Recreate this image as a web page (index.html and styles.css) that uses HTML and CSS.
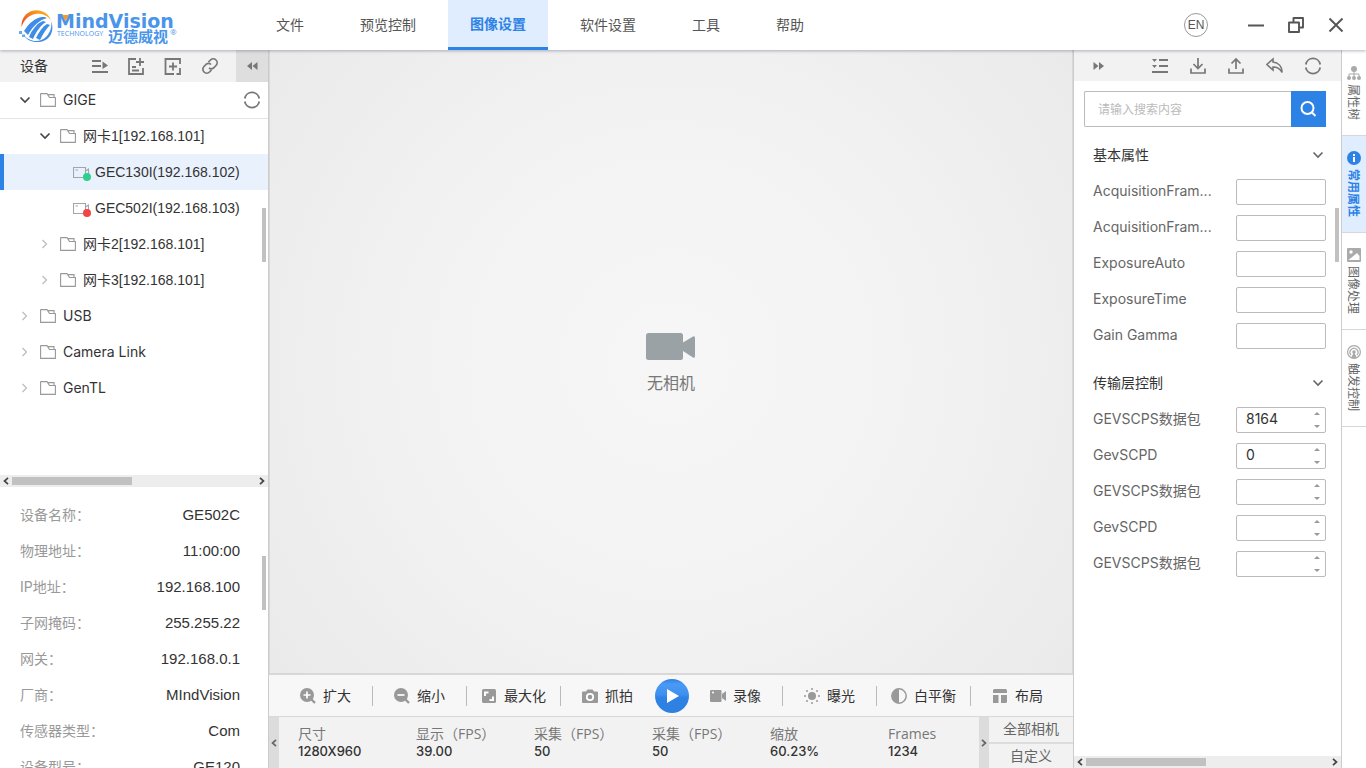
FILE: index.html
```html
<!DOCTYPE html>
<html lang="zh-CN">
<head>
<meta charset="utf-8">
<title>MindVision</title>
<link rel="stylesheet" href="styles.css">
</head>
<body>
<svg width="0" height="0" class="defs" aria-hidden="true">
  <symbol id="folder" viewBox="0 0 16 14"><path d="M.6 13.4V1Q.6.6 1 .6H7L9.5 4.5H15.4V13.4ZM7.5 1.6H14V4.5" fill="none" stroke="currentColor" stroke-width="1.1"/></symbol>
  <symbol id="down" viewBox="0 0 12 8"><path d="M1.5 1.5 6 6 10.500 1.500" fill="none" stroke="currentColor" stroke-width="1.600"/></symbol>
  <symbol id="right" viewBox="0 0 8 12"><path d="M1.500 2 5.500 6 1.500 10" fill="none" stroke="currentColor" stroke-width="1.200"/></symbol>
  <symbol id="cam" viewBox="0 0 18 16"><path d="M.5 2.500H12.500V12.500H.5ZM2.500 5H5M12.500 6 15.500 4V10" fill="none" stroke="#a3a6a8" stroke-width="1.100"/><circle cx="14" cy="12" r="4" fill="currentColor"/></symbol>
  <symbol id="sync" viewBox="0 0 18 18"><path d="M1.800 7.500A7.300 7.300 0 0 1 16.200 7.500M16.200 10.500A7.300 7.300 0 0 1 1.800 10.500" fill="none" stroke="currentColor" stroke-width="1.800"/></symbol>
  <symbol id="arl" viewBox="0 0 6 8"><path d="M5 .8 1.500 4 5 7.200" fill="none" stroke="currentColor" stroke-width="1.700"/></symbol>
  <symbol id="arr" viewBox="0 0 6 8"><path d="M1 .8 4.500 4 1 7.200" fill="none" stroke="currentColor" stroke-width="1.700"/></symbol>
</svg>

<header class="header">
  <svg class="logo" width="160" height="41" viewBox="0 0 160 41" role="img" aria-label="MindVision">
    <defs><linearGradient id="sun" x1="0" y1="1" x2="1" y2="0"><stop offset="0" stop-color="#e8401c"/><stop offset=".5" stop-color="#f47b1c"/><stop offset="1" stop-color="#fdc51f"/></linearGradient></defs>
    <path d="M2.500 18C2 7 10 1 18 1.200C25 1.400 30 6 32 11C27 5 21 4 16 5C9 6.500 5 11 2.500 18Z" fill="url(#sun)"/>
    <path d="M5 22C10 14 16 9 23 8C25 7.700 27 8.200 28 9C20 11 14 17 9 26Z" fill="#3f8de6"/>
    <path d="M0 22H3V25H0ZM3 25.500H6V28H3Z" fill="#6aa9ec"/>
    <path d="M10 28C13 21 18 14 24 12L27 13C21 17 17 23 14 30ZM17 29C20 23 23 18 28 15L31 16C27 20 24 25 21 31Z" fill="#3f8de6"/>
    <path d="M5 26C9 32 20 35 27 28C32 23 33 17 32 12C36 22 31 32 20 33C13 33.500 7 31 5 26Z" fill="#3f8de6"/>
    <text x="37" y="19" class="logo-name">MindVision</text>
    <path d="M43 6H50L46.500 12Z" fill="#f49a2d"/>
    <text x="38" y="27" class="logo-tech">TECHNOLOGY</text>
    <text x="89" y="33" class="logo-cn">迈德威视</text>
    <text x="151" y="26" class="logo-reg">®</text>
  </svg>
  <nav class="nav">
    <a href="#">文件</a><a href="#">预览控制</a><a href="#" class="active">图像设置</a><a href="#">软件设置</a><a href="#">工具</a><a href="#">帮助</a>
  </nav>
  <div class="window-tools">
    <button class="lang">EN</button>
    <button aria-label="最小化"><svg width="16" height="16"><path d="M0 8.500H16" stroke="#555" stroke-width="2"/></svg></button>
    <button aria-label="还原"><svg width="16" height="16"><path d="M1 5.500H11V15H1ZM5.500 5V1H15V10.500H11.500" fill="none" stroke="#555" stroke-width="1.900" stroke-linejoin="round"/></svg></button>
    <button aria-label="关闭"><svg width="16" height="16"><path d="M1.500 1.500 14.500 14.500M14.500 1.500 1.500 14.500" stroke="#555" stroke-width="1.900"/></svg></button>
  </div>
</header>

<div class="main">
  <aside class="left">
    <div class="bar left-bar">
      <h2>设备</h2>
      <div class="bar-tools">
        <button aria-label="列表"><svg width="18" height="18"><path d="M2 4H11M2 9H11M2 15H18" stroke="currentColor" stroke-width="1.900"/><path d="M12.500 4.500 18 8.500 12.500 12Z" fill="currentColor"/></svg></button>
        <button aria-label="添加文档"><svg width="18" height="18"><path d="M9 2H2V17H16V11M5 10H9M5 13.500H12" fill="none" stroke="currentColor" stroke-width="1.800"/><path d="M13 1V9M9 5H17" stroke="currentColor" stroke-width="1.800"/></svg></button>
        <button aria-label="添加"><svg width="18" height="18"><path d="M16 7V2H1.500V17H10M12.500 17H16V11M9 5.500V13.500M5 9.500H13" fill="none" stroke="currentColor" stroke-width="1.800"/></svg></button>
        <button aria-label="链接"><svg width="18" height="18"><path d="M7.500 5 9.500 3A3.800 3.800 0 0 1 15 8.500L12.500 11A3.800 3.800 0 0 1 8 11M10.500 13 8.500 15A3.800 3.800 0 0 1 3 9.500L5.500 7A3.800 3.800 0 0 1 10 7.500" fill="none" stroke="currentColor" stroke-width="1.700"/></svg></button>
      </div>
      <button class="collapse" aria-label="收起"><svg width="11" height="8"><path d="M5 0V8L0 4ZM10.500 0V8L5.500 4Z" fill="currentColor"/></svg></button>
    </div>
    <div class="tree-wrap">
      <ul class="tree">
        <li class="row root"><svg class="tw open"><use href="#down"/></svg><svg class="folder"><use href="#folder"/></svg><span>GIGE</span><button class="refresh" aria-label="刷新"><svg width="18" height="18"><use href="#sync"/></svg></button></li>
        <li class="row l2"><svg class="tw open"><use href="#down"/></svg><svg class="folder"><use href="#folder"/></svg><span>网卡1[192.168.101]</span></li>
        <li class="row l3 selected"><svg class="cam on"><use href="#cam"/></svg><span>GEC130I(192.168.102)</span></li>
        <li class="row l3"><svg class="cam off"><use href="#cam"/></svg><span>GEC502I(192.168.103)</span></li>
        <li class="row l2"><svg class="tw"><use href="#right"/></svg><svg class="folder"><use href="#folder"/></svg><span>网卡2[192.168.101]</span></li>
        <li class="row l2"><svg class="tw"><use href="#right"/></svg><svg class="folder"><use href="#folder"/></svg><span>网卡3[192.168.101]</span></li>
        <li class="row"><svg class="tw"><use href="#right"/></svg><svg class="folder"><use href="#folder"/></svg><span>USB</span></li>
        <li class="row"><svg class="tw"><use href="#right"/></svg><svg class="folder"><use href="#folder"/></svg><span>Camera Link</span></li>
        <li class="row"><svg class="tw"><use href="#right"/></svg><svg class="folder"><use href="#folder"/></svg><span>GenTL</span></li>
      </ul>
      <div class="vthumb tree-thumb"></div>
    </div>
    <div class="hscroll"><svg width="6" height="8"><use href="#arl"/></svg><div class="track"><div class="hthumb"></div></div><svg width="6" height="8"><use href="#arr"/></svg></div>
    <div class="details-wrap">
      <dl class="details">
        <div><dt>设备名称：</dt><dd>GE502C</dd></div>
        <div><dt>物理地址：</dt><dd>11:00:00</dd></div>
        <div><dt>IP地址：</dt><dd>192.168.100</dd></div>
        <div><dt>子网掩码：</dt><dd>255.255.22</dd></div>
        <div><dt>网关：</dt><dd>192.168.0.1</dd></div>
        <div><dt>厂商：</dt><dd>MIndVision</dd></div>
        <div><dt>传感器类型：</dt><dd>Com</dd></div>
        <div><dt>设备型号：</dt><dd>GE120</dd></div>
      </dl>
      <div class="vthumb details-thumb"></div>
    </div>
  </aside>

  <main class="center">
    <section class="view">
      <svg width="50" height="28" viewBox="0 0 50 28"><rect width="37" height="27" rx="2.500" fill="#9aa2a5"/><path d="M37 9.500 47 3.500Q49 2.500 49 5V23Q49 25.500 47 24.500L37 18Z" fill="#9aa2a5"/></svg>
      <p>无相机</p>
    </section>
    <div class="actions">
      <button class="act"><svg width="16" height="16"><circle cx="7" cy="7" r="7"/><path d="M11 11 15 15" stroke="#999" stroke-width="2.400"/><path d="M7 3.500V10.500M3.500 7H10.500" stroke="#fff" stroke-width="1.700"/></svg>扩大</button>
      <button class="act"><svg width="16" height="16"><circle cx="7" cy="7" r="7"/><path d="M11 11 15 15" stroke="#999" stroke-width="2.400"/><path d="M3.500 7H10.500" stroke="#fff" stroke-width="1.700"/></svg>缩小</button>
      <button class="act"><svg width="16" height="16"><rect x="1" y="1" width="14" height="14" rx="1.500"/><path d="M4 8V4.500H7.500M12 8.500V12H8.500" fill="none" stroke="#fff" stroke-width="2"/></svg>最大化</button>
      <button class="act last"><svg width="16" height="16"><path d="M1 3.500H4L5.500 1.500H10.500L12 3.500H15Q16 3.500 16 4.500V14Q16 15 15 15H1Q0 15 0 14V4.500Q0 3.500 1 3.500Z"/><circle cx="8" cy="9" r="3.200" fill="none" stroke="#fff" stroke-width="1.800"/></svg>抓拍</button>
      <button class="play" aria-label="播放"><svg width="34" height="34"><defs><linearGradient id="pg" x1="0" y1="0" x2="0" y2="1"><stop offset="0" stop-color="#2f7fe0"/><stop offset=".15" stop-color="#4a9af5"/><stop offset=".45" stop-color="#3f90ee"/><stop offset=".55" stop-color="#2d82e5"/><stop offset="1" stop-color="#2e80e0"/></linearGradient></defs><circle cx="17" cy="17" r="17" fill="url(#pg)"/><path d="M12 10V24L24 17Z" fill="#fff"/></svg></button>
      <button class="act"><svg width="16" height="16"><rect y="2" width="11.500" height="12" rx="1"/><path d="M12 6 16 3V13L12 10Z"/><circle cx="3" cy="4.500" r="1" fill="#fff"/></svg>录像</button>
      <button class="act"><svg width="16" height="16"><circle cx="8" cy="8" r="4"/><g><circle cx="8" cy="1" r="1"/><circle cx="8" cy="15" r="1"/><circle cx="1" cy="8" r="1"/><circle cx="15" cy="8" r="1"/><circle cx="3" cy="3" r="1"/><circle cx="13" cy="3" r="1"/><circle cx="3" cy="13" r="1"/><circle cx="13" cy="13" r="1"/></g></svg>曝光</button>
      <button class="act"><svg width="16" height="16"><circle cx="8" cy="8" r="7.200" fill="none" stroke="#999" stroke-width="1.500"/><path d="M8 1A7 7 0 0 0 8 15Z"/></svg>白平衡</button>
      <button class="act last"><svg width="16" height="16"><path d="M2.500 1H13.500Q15 1 15 2.500V5H1V2.500Q1 1 2.500 1ZM1 7H6.500V15H1ZM9 7H15V13.500Q15 15 13.500 15H9Z"/></svg>布局</button>
    </div>
    <div class="status">
      <button class="step" aria-label="向左"><svg width="6" height="8"><use href="#arl"/></svg></button>
      <dl class="stats">
        <div><dt>尺寸</dt><dd>1280X960</dd></div>
        <div><dt>显示（FPS）</dt><dd>39.00</dd></div>
        <div><dt>采集（FPS）</dt><dd>50</dd></div>
        <div><dt>采集（FPS）</dt><dd>50</dd></div>
        <div><dt>缩放</dt><dd>60.23%</dd></div>
        <div><dt>Frames</dt><dd>1234</dd></div>
      </dl>
      <button class="step" aria-label="向右"><svg width="6" height="8"><use href="#arr"/></svg></button>
      <div class="modes"><button>全部相机</button><button>自定义</button></div>
    </div>
  </main>

  <aside class="right">
    <div class="bar right-bar">
      <button aria-label="收起"><svg width="11" height="8"><path d="M.5 0V8L5.500 4ZM6 0V8L11 4Z" fill="currentColor"/></svg></button>
      <div class="bar-tools">
        <button aria-label="列表"><svg width="18" height="18"><path d="M7 3H16M7 9H16M0 15H16" stroke="currentColor" stroke-width="1.900"/><path d="M0 2H5L2.500 5ZM0 8H5L2.500 11Z" fill="currentColor"/></svg></button>
        <button aria-label="下载"><svg width="18" height="18"><path d="M8 1V11M3.500 7 8 11.500 12.500 7M1 11.500V16H15V11.500" fill="none" stroke="currentColor" stroke-width="1.700"/></svg></button>
        <button aria-label="上传"><svg width="18" height="18"><path d="M8 12V2M3.500 6.500 8 2 12.500 6.500M1 11.500V16H15V11.500" fill="none" stroke="currentColor" stroke-width="1.700"/></svg></button>
        <button aria-label="撤销"><svg width="18" height="18"><path d="M7 2 .8 7.500 7 13V10C11 10 14 11.500 16 15.500C16 9 12 5.500 7 5Z" fill="none" stroke="currentColor" stroke-width="1.600"/></svg></button>
        <button aria-label="刷新"><svg width="18" height="18"><use href="#sync"/></svg></button>
      </div>
    </div>
    <form class="search"><input type="search" placeholder="请输入搜索内容" aria-label="搜索"><button type="button" aria-label="搜索"><svg width="18" height="18"><circle cx="7.500" cy="8" r="6" fill="none" stroke="#fff" stroke-width="2"/><path d="M12 12.500 15.500 16" stroke="#fff" stroke-width="2"/></svg></button></form>
    <div class="props">
      <section class="group">
        <h3>基本属性<svg width="12" height="8"><use href="#down"/></svg></h3>
        <div class="prop"><label for="p1">AcquisitionFram...</label><input id="p1" type="text"></div>
        <div class="prop"><label for="p2">AcquisitionFram...</label><input id="p2" type="text"></div>
        <div class="prop"><label for="p3">ExposureAuto</label><input id="p3" type="text"></div>
        <div class="prop"><label for="p4">ExposureTime</label><input id="p4" type="text"></div>
        <div class="prop"><label for="p5">Gain Gamma</label><input id="p5" type="text"></div>
      </section>
      <section class="group">
        <h3>传输层控制<svg width="12" height="8"><use href="#down"/></svg></h3>
        <div class="prop num"><label for="n1">GEVSCPS数据包</label><input id="n1" type="number" value="8164"><svg class="spin" width="6" height="16"><path d="M0 3 3 0 6 3ZM0 13 3 16 6 13Z"/></svg></div>
        <div class="prop num"><label for="n2">GevSCPD</label><input id="n2" type="number" value="0"><svg class="spin" width="6" height="16"><path d="M0 3 3 0 6 3ZM0 13 3 16 6 13Z"/></svg></div>
        <div class="prop num"><label for="n3">GEVSCPS数据包</label><input id="n3" type="number"><svg class="spin" width="6" height="16"><path d="M0 3 3 0 6 3ZM0 13 3 16 6 13Z"/></svg></div>
        <div class="prop num"><label for="n4">GevSCPD</label><input id="n4" type="number"><svg class="spin" width="6" height="16"><path d="M0 3 3 0 6 3ZM0 13 3 16 6 13Z"/></svg></div>
        <div class="prop num"><label for="n5">GEVSCPS数据包</label><input id="n5" type="number"><svg class="spin" width="6" height="16"><path d="M0 3 3 0 6 3ZM0 13 3 16 6 13Z"/></svg></div>
      </section>
    </div>
    <div class="vthumb props-thumb"></div>
    <div class="hscroll"><svg width="6" height="8"><use href="#arl"/></svg><div class="track"><div class="hthumb"></div></div><svg width="6" height="8"><use href="#arr"/></svg></div>
  </aside>

  <nav class="tabs">
    <button><svg width="14" height="14"><circle cx="7" cy="3" r="3"/><circle cx="2" cy="12" r="2"/><circle cx="7" cy="12" r="2"/><circle cx="12" cy="12" r="2"/><path d="M7 5V11M2 11V8H12V11" fill="none" stroke="currentColor"/></svg><span>属性树</span></button>
    <button class="active"><svg width="14" height="14"><circle cx="7" cy="7" r="7"/><path d="M7 3V5M7 6V11" stroke="#fff" stroke-width="2"/></svg><span>常用属性</span></button>
    <button><svg width="14" height="14"><rect width="14" height="14" rx="1"/><circle cx="4" cy="4" r="1.700" fill="#fff"/><path d="M1.500 12 10 5 12.500 8V12Z" fill="#fff"/></svg><span>图像处理</span></button>
    <button><svg width="14" height="14"><circle cx="7" cy="7" r="6.400" fill="none" stroke="currentColor" stroke-width="1.200"/><path d="M4 10A4 4 0 1 1 10 10" fill="none" stroke="currentColor" stroke-width="1.200"/><circle cx="7" cy="7" r="1.800"/><path d="M7 7 10 13H4Z"/></svg><span>触发控制</span></button>
  </nav>
</div>
</body>
</html>
```
FILE: styles.css
```css
* { box-sizing: border-box; }
body, h2, h3, p, ul, dl, dt, dd { margin: 0; padding: 0; font-weight: 400; }
body {
  height: 100vh;
  display: flex;
  flex-direction: column;
  overflow: hidden;
  background: #fff;
  color: #333;
  font: 14px/20px Inter, "Noto Sans CJK SC", sans-serif;
}
button { border: 0; padding: 0; background: none; color: inherit; font: inherit; }
button svg { display: block; }
svg { flex: none; }
a { color: inherit; text-decoration: none; }
.defs { position: absolute; }

.header {
  position: relative;
  z-index: 1;
  flex: none;
  display: flex;
  height: 50px;
  background: #fff;
  box-shadow: 0 1px 3px rgba(60, 70, 110, .4);
  font-family: "Open Sans", "Noto Sans CJK SC", sans-serif;
}
.logo { margin: 9px 0 0 19px; fill: #4a95ea; }
.logo-name { font: bold 19px "DejaVu Sans", sans-serif; }
.logo-tech { font: 7px "Open Sans", sans-serif; }
.logo-cn { font: bold 15px "Noto Sans CJK SC", sans-serif; }
.logo-reg { font: 8px "Open Sans", sans-serif; }
.nav { display: flex; margin-left: 75px; color: #555; }
.nav a { display: flex; align-items: center; padding: 2px 22px 0; border-bottom: 3px solid transparent; margin-right: 12px; }
.nav a:nth-child(2), .nav a:nth-child(3) { margin-right: 10px; }
.nav a.active { padding-top: 0; background: #e0edff; border-color: #2d82e5; color: #2d82e5; font-weight: 700; }
.window-tools { display: flex; align-items: center; gap: 24px; margin-left: auto; padding-right: 22px; color: #555; }
.window-tools .lang { width: 24px; height: 24px; margin-right: 16px; border: 1px solid #999; border-radius: 50%; font: 12px/22px "Liberation Sans", sans-serif; }

.main { flex: 1; display: flex; min-height: 0; }
.bar { flex: none; display: flex; align-items: center; height: 32px; background: #f2f2f2; color: #777; }
.bar-tools { display: flex; align-items: center; }

.left { flex: none; display: flex; flex-direction: column; width: 269px; border-right: 1px solid #ccc; }
.left-bar { padding-left: 20px; }
.left-bar h2 { width: 70px; color: #333; font-size: 14px; }
.left-bar .bar-tools { gap: 19px; }
.collapse { display: grid; place-items: center; width: 32px; height: 32px; margin-left: auto; background: #dedede; }
.tree-wrap { position: relative; flex: none; height: 393px; }
.tree { list-style: none; }
.row { display: flex; align-items: center; height: 36px; padding-left: 19px; }
.row .tw { width: 8px; height: 12px; margin: 0 11px 0 2px; color: #bbb; }
.row .tw.open { width: 12px; height: 8px; margin: 0 9px 0 0; color: #444; }
.row .folder { width: 16px; height: 14px; margin-right: 7px; color: #999; }
.row.root { border-bottom: 1px solid #e4e4e4; height: 37px; margin-bottom: -1px; }
.refresh { margin: 0 7px 0 auto; color: #777; }
.row.l2, .row.l3 { font-family: "Liberation Sans", "Noto Sans CJK SC", sans-serif; }
.row.l2 { padding-left: 39px; }
.row.l3 { padding-left: 73px; }
.row.selected { padding-left: 69px; border-left: 4px solid #2d82e5; background: #e9f1fd; }
.cam { width: 18px; height: 16px; margin: 2px 4px 0 0; }
.cam.on { color: #2fd08d; }
.cam.off { color: #f24545; }
.vthumb { position: absolute; right: 2px; width: 4px; height: 54px; background: #c1c1c1; }
.tree-thumb { top: 126px; }
.hscroll { flex: none; display: flex; align-items: center; gap: 3px; height: 12px; padding: 0 3px; background: #ededed; color: #444; }
.track { flex: 1; }
.hthumb { width: 120px; height: 8px; background: #c1c1c1; }
.details-wrap { position: relative; flex: 1; min-height: 0; padding-top: 10px; overflow: hidden; }
.details-thumb { top: 69px; }
.details div { display: flex; align-items: center; justify-content: space-between; height: 36px; padding: 0 28px 0 20px; }
.details dt { color: #999; }
.details dd { font: 15px/20px "Liberation Sans", sans-serif; }

.center { flex: 1; display: flex; flex-direction: column; min-width: 0; font-family: "Open Sans", "Noto Sans CJK SC", sans-serif; }
.view {
  flex: 1;
  display: flex;
  flex-direction: column;
  align-items: center;
  justify-content: center;
  gap: 10px;
  padding-top: 4px;
  border: 1px solid #d8d8d8;
  border-width: 0 1px 2px;
  background: radial-gradient(circle, #f6f6f6, #f3f3f3 45%, #eaeaeb);
  color: #777;
  font-size: 16px;
  line-height: 24px;
}
.actions { flex: none; display: flex; align-items: center; height: 41px; padding: 0 8px 0 10px; background: #f7f7f7; color: #333; }
.act { flex: 1; display: flex; align-items: center; justify-content: center; gap: 7px; height: 20px; border-right: 1px solid #bbb; white-space: nowrap; }
.act.last { border-color: transparent; }
.act svg { fill: #999; }
.status { flex: none; display: flex; height: 52px; border-top: 1px solid #d8d8d8; background: #f2f2f2; }
.step { flex: none; display: grid; place-items: center; width: 10px; background: #dcdcdc; color: #666; }
.stats { flex: 1; display: grid; grid-template-columns: repeat(5, 118fr) 110fr; padding-top: 8px; line-height: 18px; }
.stats div { padding-left: 19px; white-space: nowrap; }
.stats dt { color: #777; }
.stats dd { font: 500 13px/16px Inter, sans-serif; }
.modes { flex: none; display: flex; flex-direction: column; width: 84px; color: #666; }
.modes button { flex: 1; }
.modes button + button { border-top: 2px solid #dcdcdc; }

.right { position: relative; flex: none; display: flex; flex-direction: column; width: 269px; border: 1px solid #ccc; border-width: 0 1px; }
.right-bar { height: 31px; padding: 0 19px; justify-content: space-between; }
.right-bar .bar-tools { gap: 20px; }
.search { display: flex; height: 36px; margin: 10px 15px 0 10px; }
.search input { flex: 1; min-width: 0; padding: 0 13px 2px; border: 1px solid #bbb; border-right: 0; border-radius: 2px 0 0 2px; font: 12px "Noto Sans CJK SC", sans-serif; }
.search input::placeholder { color: #bbb; }
.search button { display: grid; place-items: center; width: 35px; background: #2d82e5; }
.props { flex: 1; min-height: 0; overflow: hidden; padding: 10px 15px 0 19px; }
.group { margin-bottom: 12px; }
.group h3 { display: flex; align-items: center; justify-content: space-between; height: 36px; padding-right: 2px; font-size: 14px; }
.group h3 svg { color: #666; }
.prop { position: relative; display: flex; align-items: center; justify-content: space-between; height: 36px; color: #666; }
.prop input { width: 90px; height: 26px; margin-top: 2px; padding: 0 9px 3px; border: 1px solid #bbb; border-radius: 2px; background: #fff; color: #333; font: inherit; appearance: none; }
.prop input[type=number] { appearance: textfield; padding-right: 18px; }
.prop input::-webkit-inner-spin-button { display: none; }
.spin { position: absolute; right: 6px; top: 11px; fill: #999; pointer-events: none; }
.props-thumb { top: 158px; }

.tabs { flex: none; width: 24px; padding-top: 1px; font-size: 12px; color: #666; }
.tabs button { display: flex; flex-direction: column; align-items: center; gap: 4px; width: 100%; padding: 15px 0; border-bottom: 1px solid #d8d8d8; line-height: 16px; }
.tabs svg { fill: currentColor; color: #aaa; }
.tabs span { padding-right: 3px; writing-mode: vertical-rl; text-orientation: sideways; }
.tabs .active { background: #e0edff; color: #2d82e5; font-weight: 700; }
.tabs .active svg { color: #2d82e5; }
```
